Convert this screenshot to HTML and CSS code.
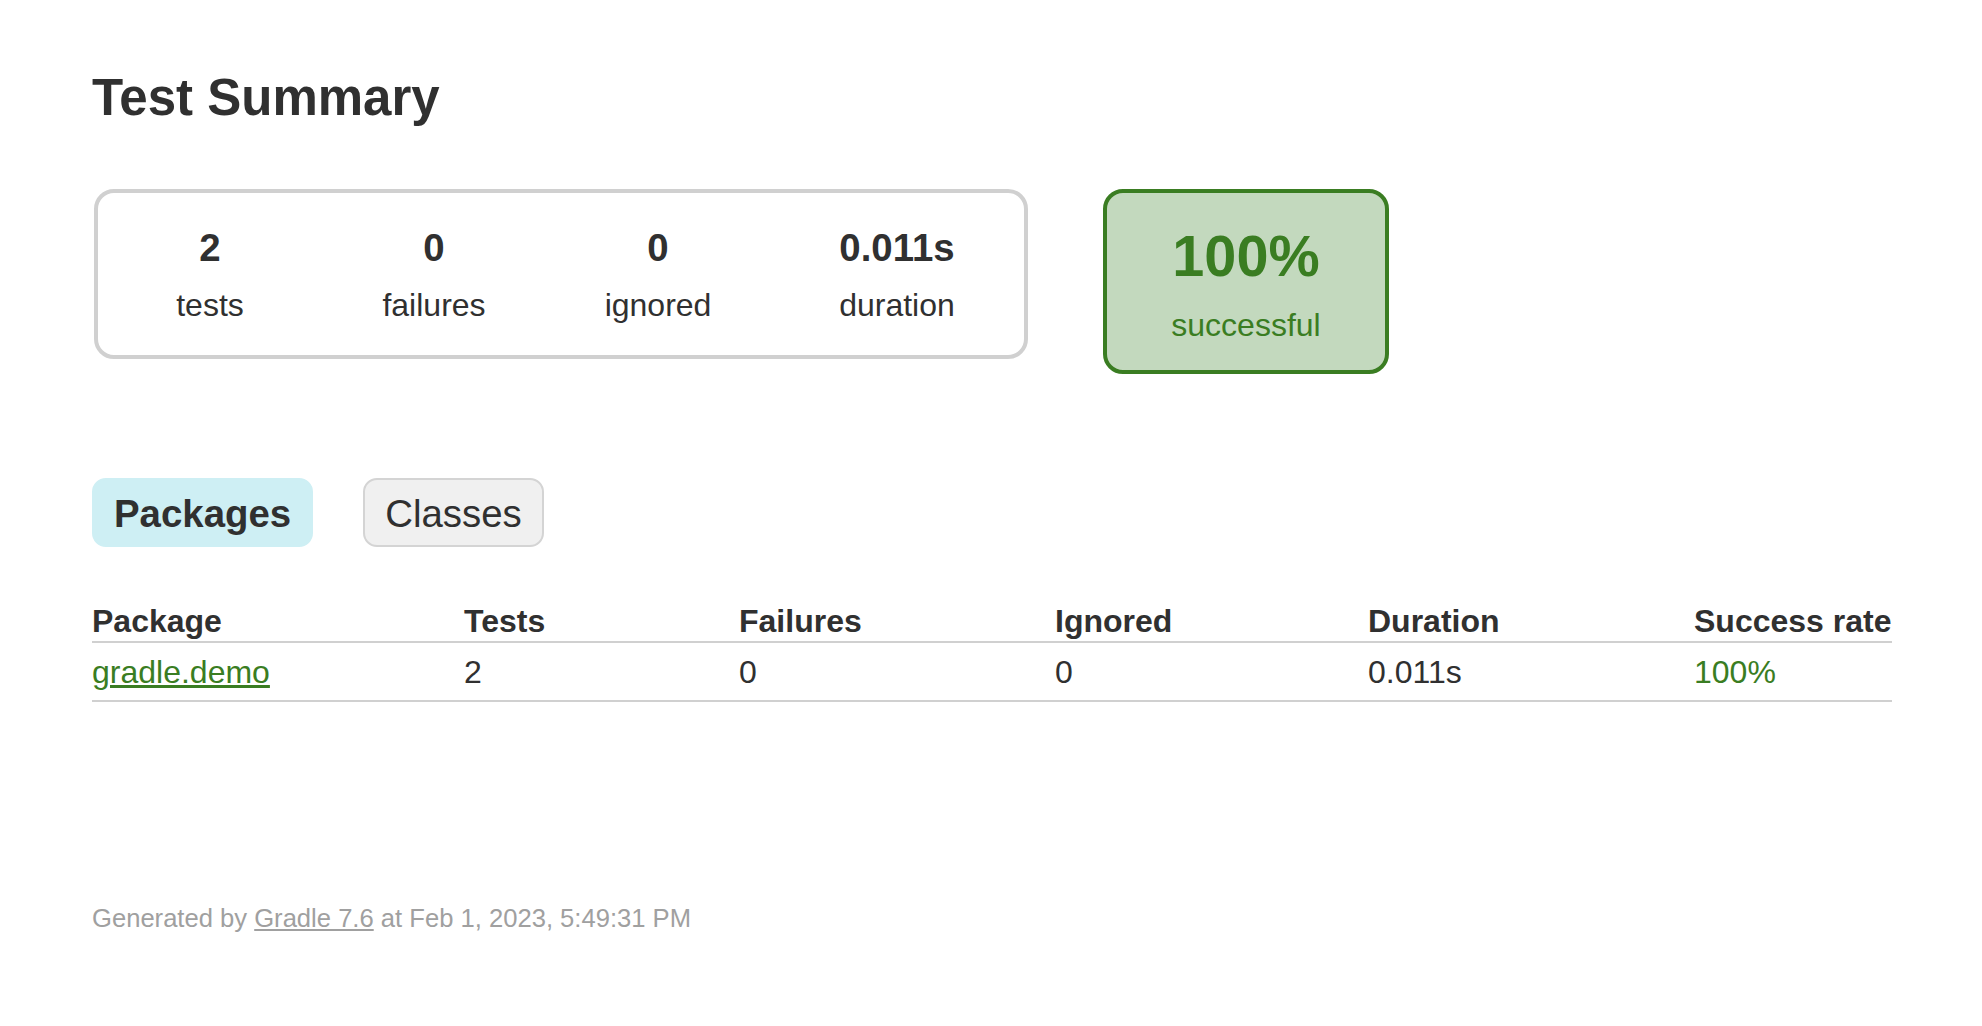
FILE: index.html
```html
<!DOCTYPE html>
<html>
<head>
<meta charset="utf-8">
<title>Test results - Test Summary</title>
<link rel="stylesheet" href="styles.css">
</head>
<body>
<div class="content">
  <h1 class="title">Test Summary</h1>
  <div class="summary">
    <div class="summary-group">
      <div class="info-box">
        <div class="counter">2</div>
        <p class="label">tests</p>
      </div>
      <div class="info-box">
        <div class="counter">0</div>
        <p class="label">failures</p>
      </div>
      <div class="info-box">
        <div class="counter">0</div>
        <p class="label">ignored</p>
      </div>
      <div class="info-box info-box-duration">
        <div class="counter">0.011s</div>
        <p class="label">duration</p>
      </div>
    </div>
    <div class="success-rate">
      <div class="percent">100%</div>
      <p class="label">successful</p>
    </div>
  </div>

  <ul class="tab-links">
    <li class="tab-link selected"><h2 class="tab-title">Packages</h2></li>
    <li class="tab-link"><a class="tab-anchor" href="#tab1">Classes</a></li>
  </ul>

  <table class="results">
    <colgroup>
      <col class="col-package">
      <col class="col-tests">
      <col class="col-failures">
      <col class="col-ignored">
      <col class="col-duration">
      <col class="col-rate">
    </colgroup>
    <thead>
      <tr>
        <th>Package</th>
        <th>Tests</th>
        <th>Failures</th>
        <th>Ignored</th>
        <th>Duration</th>
        <th>Success rate</th>
      </tr>
    </thead>
    <tbody>
      <tr>
        <td class="success"><a class="pkg-link" href="#">gradle.demo</a></td>
        <td>2</td>
        <td>0</td>
        <td>0</td>
        <td>0.011s</td>
        <td class="success">100%</td>
      </tr>
    </tbody>
  </table>

  <div class="footer">
    Generated by <a class="footer-link" href="#">Gradle 7.6</a> at Feb 1, 2023, 5:49:31 PM
  </div>
</div>
</body>
</html>
```

FILE: styles.css
```css
html, body {
  margin: 0;
  padding: 0;
  background: #ffffff;
}

body {
  font-family: "Liberation Sans", Arial, Helvetica, sans-serif;
  font-size: 32px;
  color: #303030;
}

.content {
  padding: 68px 90px 40px 92px;
}

.title {
  margin: 0;
  font-size: 51px;
  line-height: 59px;
  font-weight: bold;
  color: #303030;
  white-space: nowrap;
}

.summary {
  display: flex;
  align-items: flex-start;
  margin-top: 60px;
  padding: 2px;
}

.summary-group {
  display: flex;
  border: 4px solid #d0d0d0;
  border-radius: 20px;
}

.info-box {
  width: 224px;
  padding: 33px 0 31px;
  text-align: center;
}

.info-box-duration {
  width: 254px;
}

.counter {
  font-size: 38.4px;
  line-height: 44px;
  font-weight: bold;
  margin-bottom: 17px;
}

.label {
  margin: 0;
  font-size: 32px;
  line-height: 37px;
}

.success-rate {
  width: 278px;
  margin-left: 75px;
  padding: 30px 0 26px;
  text-align: center;
  border: 4px solid #3a7d22;
  border-radius: 20px;
  background: #c3d9be;
  color: #3a7d22;
}

.percent {
  font-size: 57.6px;
  line-height: 66px;
  font-weight: bold;
  margin-bottom: 18px;
}

.tab-links {
  display: flex;
  list-style: none;
  margin: 102px 0 0 0;
  padding: 0;
}

.tab-link {
  margin-right: 50px;
  padding: 12px 20px 9px;
  border: 2px solid #d4d4d4;
  border-radius: 14px;
  background: #f0f0f0;
}

.tab-link.selected {
  background: #ceeff4;
  border-color: #ceeff4;
}

.tab-title {
  margin: 0;
  font-size: 38.4px;
  line-height: 44px;
  font-weight: bold;
  color: #303030;
}

.tab-anchor {
  display: block;
  font-size: 38.4px;
  line-height: 44px;
  color: #303030;
  text-decoration: none;
}

.results {
  width: 100%;
  margin-top: 53px;
  border-collapse: collapse;
  table-layout: fixed;
  border-bottom: 2px solid #d0d0d0;
}

.col-package { width: 372px; }
.col-tests { width: 275px; }
.col-failures { width: 316px; }
.col-ignored { width: 313px; }
.col-duration { width: 326px; }
.col-rate { width: 198px; }

.results th {
  text-align: left;
  white-space: nowrap;
  padding: 3px 0 1px;
  font-size: 32px;
  line-height: 37px;
  font-weight: bold;
  border-bottom: 2px solid #d0d0d0;
}

.results td {
  white-space: nowrap;
  padding: 11px 0 9px;
  font-size: 32px;
  line-height: 37px;
}

.success, .pkg-link {
  color: #3a7d22;
}

.pkg-link {
  text-decoration: underline;
}

.footer {
  margin-top: 202px;
  font-size: 25.6px;
  line-height: 29px;
  color: #a0a0a0;
  white-space: nowrap;
}

.footer-link {
  color: #a0a0a0;
  text-decoration: underline;
}
```
